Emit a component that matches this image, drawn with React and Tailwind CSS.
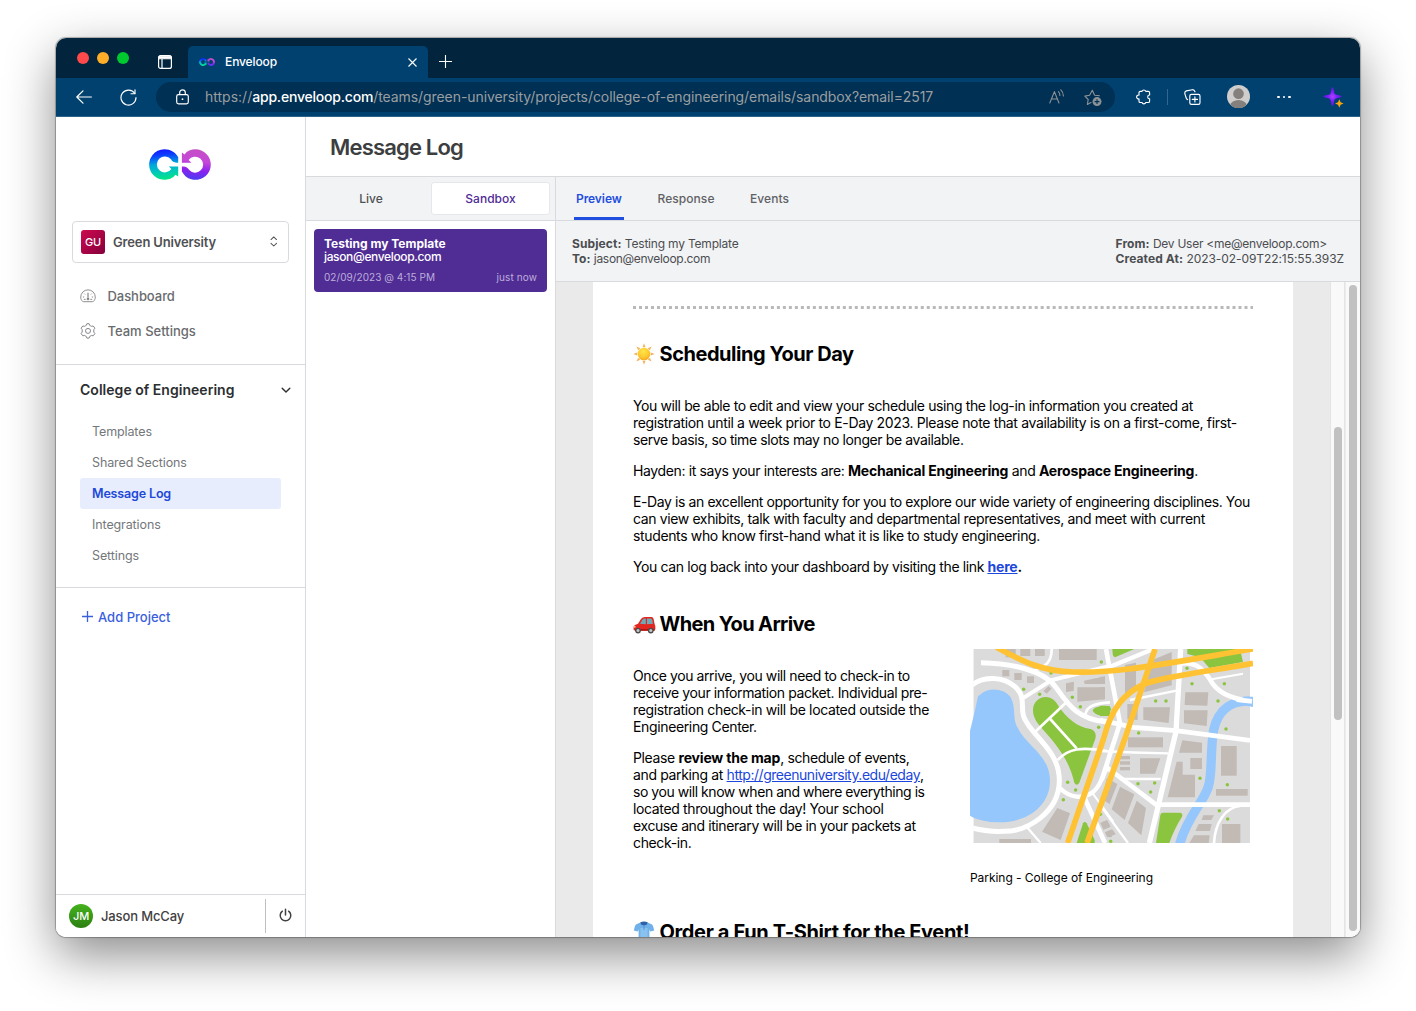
import React from "react";

/* ---------- brand ---------- */
function Logo({ className, id }) {
  return (
    <svg viewBox="0 0 62 31" className={className}>
      <defs>
        <linearGradient id={id + "l"} x1="0.3" y1="0" x2="0.4" y2="1">
          <stop offset="0" stopColor="#1616ff" />
          <stop offset="0.2" stopColor="#0d3cff" />
          <stop offset="0.5" stopColor="#00a8dc" />
          <stop offset="0.8" stopColor="#00cfae" />
          <stop offset="1" stopColor="#00e585" />
        </linearGradient>
        <linearGradient id={id + "r"} x1="0.6" y1="0" x2="0.5" y2="1">
          <stop offset="0" stopColor="#c44ec4" />
          <stop offset="0.4" stopColor="#c548d8" />
          <stop offset="0.7" stopColor="#8a22ee" />
          <stop offset="1" stopColor="#4a3cf0" />
        </linearGradient>
      </defs>
      <path
        fill={"url(#" + id + "l)"}
        d="M29.2 8.2C26.6 3.2 21.4 0.2 15.6 0.2A15.3 15.3 0 1 0 24.4 27.9L26.4 25.8L29.2 27.4V17.4H19.8L22.4 20A8 8 0 1 1 22 10.3C23.2 12.4 25 13.6 27.4 13.7H29.2Z"
      />
      <path
        fill={"url(#" + id + "r)"}
        d="M32.9 3.6L35.6 5.4L37.6 3.1A15.3 15.3 0 1 1 32.9 22.6V17.4H34.6C37.2 17.5 38.8 18.8 40 20.8A8 8 0 1 0 39.6 11L42.4 13.7H32.9Z"
      />
    </svg>
  );
}

/* ---------- browser chrome ---------- */
function TabStrip() {
  return (
    <div className="flex h-10 shrink-0 bg-[#02253d]">
      <div className="flex w-[132px] items-start pl-[21px]">
        <div className="flex gap-2 pt-[14px]">
          <span className="size-3 rounded-full bg-[#ff494a]" />
          <span className="size-3 rounded-full bg-[#ffae29]" />
          <span className="size-3 rounded-full bg-[#00c92f]" />
        </div>
        <svg viewBox="0 0 14 14" className="mt-[17px] ml-[29px] size-[14px]" fill="none" stroke="#fff" strokeWidth="1.2">
          <rect x="0.6" y="0.6" width="12.8" height="12.8" rx="2" />
          <path d="M4 4V13.4" />
          <path d="M1 1.2H13V3.8H1Z" fill="#fff" stroke="#fff" strokeWidth="0.8" />
        </svg>
      </div>
      <div className="mt-2 flex w-60 items-center rounded-t-[5px] bg-[#004170] pl-[11px]">
        <Logo id="tab" className="h-[8px] w-4" />
        <span className="ml-[10px] flex-1 text-[12px] leading-4 font-medium tracking-[-0.11px] text-white">Enveloop</span>
        <svg viewBox="0 0 9 9" className="mr-[11px] size-[9px]" stroke="#fff" strokeWidth="1.1">
          <path d="M0.5 0.5L8.5 8.5M8.5 0.5L0.5 8.5" />
        </svg>
      </div>
      <svg viewBox="0 0 13 13" className="mt-[17px] ml-[11px] size-[13px]" stroke="#fff" strokeWidth="1.1">
        <path d="M6.5 0V13M0 6.5H13" />
      </svg>
    </div>
  );
}

function Toolbar() {
  return (
    <div className="flex h-[39px] shrink-0 items-center border-b border-[#2e6489] bg-[#004170]">
      <svg viewBox="0 0 16 14" className="ml-[19.5px] h-[14px] w-4" fill="none" stroke="#fff" strokeWidth="1.2" strokeLinecap="round" strokeLinejoin="round">
        <path d="M15.4 7H0.8M7 0.8L0.8 7L7 13.2" />
      </svg>
      <svg viewBox="0 0 17 17" className="ml-7 size-[17px]" fill="none" stroke="#fff" strokeWidth="1.15" strokeLinecap="round" strokeLinejoin="round">
        <path d="M14.8 4.5A7.5 7.5 0 1 0 16 8.5" />
        <path d="M15 0.8V4.7H11" />
      </svg>
      <div className="ml-[19.5px] flex h-[30px] w-[959px] items-center rounded-full bg-[#003053]">
        <svg viewBox="0 0 13 16" className="mb-px ml-[19.5px] h-4 w-[13px]" fill="none" stroke="#fff" strokeWidth="1.2">
          <rect x="0.7" y="5.6" width="11.6" height="9.3" rx="1.8" />
          <path d="M3.7 5.6V3.6A2.8 2.8 0 0 1 9.3 3.6V5.6" />
          <circle cx="6.5" cy="10.2" r="0.9" fill="#fff" stroke="none" />
        </svg>
        <div className="ml-[16.5px] flex flex-1 text-[14px] leading-5 whitespace-nowrap text-[#9a9ea1]">
          <span>https://</span>
          <span className="font-medium tracking-[-0.2px] text-white">app.enveloop.com</span>
          <span className="tracking-[-0.076px]">/teams/green-university/projects/college-of-engineering/emails/sandbox?email=2517</span>
        </div>
        <svg viewBox="0 0 16 15" className="mr-[19px] mb-px h-[15px] w-4" fill="none" stroke="#8d9296" strokeWidth="1.1" strokeLinecap="round" strokeLinejoin="round">
          <path d="M0.8 14L5.4 2.6L10 14M2.4 10H8.4" />
          <path d="M9.4 2.6A5 5 0 0 1 10.9 6.4M11.8 0.8A8 8 0 0 1 14.4 7" />
        </svg>
        <svg viewBox="0 0 18 18" className="mt-px mr-[13.5px] size-[18px]" fill="none" stroke="#8d9296" strokeWidth="1.1" strokeLinejoin="round">
          <path d="M7.4 13.2L3.4 15.4L4.2 10.5L0.8 7.1L5.6 6.3L8.3 1.3L10.6 6.3L15.8 6.8" />
          <circle cx="13" cy="12.6" r="4.5" fill="#8d9296" stroke="none" />
          <path d="M13 10.2V15M10.6 12.6H15.4" stroke="#003053" />
        </svg>
      </div>
      <svg viewBox="0 0 15 16" className="ml-[21px] h-4 w-[15px]" fill="none" stroke="#fff" strokeWidth="1.15" strokeLinejoin="round">
        <path d="M3 3.6Q3 2.4 4.2 2.4H6A2 2 0 0 1 9.8 2.4H12.2Q13.6 2.4 13.6 3.8V6A1.9 1.9 0 0 0 13.6 9.8V12.2Q13.6 13.5 12.2 13.5H9.8A2 2 0 0 1 6 13.5H4.2Q3 13.5 3 12.2V9.9A1.95 1.95 0 1 1 3 6.1Z" />
      </svg>
      <span className="ml-4 h-4 w-px bg-[#33678d]" />
      <svg viewBox="0 0 17 16" className="ml-[15.5px] h-4 w-[17px]" fill="none" stroke="#fff" strokeWidth="1.15" strokeLinejoin="round" strokeLinecap="round">
        <rect x="5.8" y="5.4" width="10.2" height="10" rx="1.6" />
        <path d="M10.9 7.8V13M8.3 10.4H13.5" />
        <path d="M3.6 10.6Q2.6 10.4 2.2 9L0.9 4.8Q0.4 2.6 2.4 1.9L8.4 0.7Q10.2 0.5 11 2.8" />
      </svg>
      <svg viewBox="0 0 22 22" className="mb-px ml-[26px] size-[23px]">
        <defs>
          <clipPath id="avatar"><circle cx="11" cy="11" r="11" /></clipPath>
        </defs>
        <g clipPath="url(#avatar)">
          <rect width="22" height="22" fill="#d0cecc" />
          <circle cx="11" cy="8.3" r="5.1" fill="#83807e" />
          <ellipse cx="11" cy="19.6" rx="8" ry="5.2" fill="#83807e" />
        </g>
      </svg>
      <div className="ml-[27.5px] flex gap-[3px]">
        <span className="size-[2.5px] rounded-full bg-white" />
        <span className="size-[2.5px] rounded-full bg-white" />
        <span className="size-[2.5px] rounded-full bg-white" />
      </div>
      <svg viewBox="0 0 21 21" className="ml-8 size-[21px]">
        <defs>
          <radialGradient id="spark">
            <stop offset="0" stopColor="#a844ff" />
            <stop offset="0.5" stopColor="#7d1cff" />
            <stop offset="1" stopColor="#5a18d8" />
          </radialGradient>
        </defs>
        <path fill="url(#spark)" d="M9.5 0.3C11 0.3 10.6 5.2 11.8 7C13.4 8.3 18.6 8.2 18.6 9.6C18.6 11 13.4 10.8 11.8 12.2C10.6 14 11 18.9 9.5 18.9C8 18.9 8.4 14 7.2 12.2C5.6 10.8 0.4 11 0.4 9.6C0.4 8.2 5.6 8.3 7.2 7C8.4 5.2 8 0.3 9.5 0.3Z" />
        <path fill="#f7a50c" d="M16.3 12.2L17.6 15.2L20.6 16.5L17.6 17.8L16.3 20.8L15 17.8L12 16.5L15 15.2Z" />
      </svg>
    </div>
  );
}

/* ---------- sidebar ---------- */
function Sidebar() {
  const pages = [
    ["Templates", false],
    ["Shared Sections", false],
    ["Message Log", true],
    ["Integrations", false],
    ["Settings", false],
  ];
  return (
    <aside className="flex w-[250px] shrink-0 flex-col border-r border-[#d9dadd] bg-white">
      <div className="flex h-[104px] justify-center pt-8 pr-px">
        <Logo id="side" className="h-[31px] w-[62px]" />
      </div>
      <div className="mx-4 flex h-[42px] items-center rounded-[4px] border border-[#d9dadd] px-2">
        <span className="flex size-6 items-center justify-center rounded-[3px] bg-gradient-to-br from-[#cf0a4f] to-[#85003c] pt-px text-[11px] font-medium tracking-[-0.3px] text-white">GU</span>
        <span className="ml-2 flex-1 pt-0.5 text-[13px] font-semibold tracking-[-0.15px] text-[#4f5153]">Green University</span>
        <svg viewBox="0 0 8 12" className="mr-[3px] mb-px h-[11px] w-[7.5px]" fill="none" stroke="#505255" strokeWidth="1.1" strokeLinecap="round" strokeLinejoin="round">
          <path d="M1 3.9L4 1L7 3.9M1 8L4 10.9L7 8" />
        </svg>
      </div>
      <nav className="flex h-[102px] flex-col border-b border-[#d9dadd] pt-4 pl-6 text-[13px] font-medium text-[#696b6e]">
        <div className="flex h-[35px] items-center gap-[11.5px]">
          <svg viewBox="0 0 17 15" className="mb-px h-[14px] w-4" fill="none" stroke="#85878b" strokeWidth="1">
            <path d="M2.6 13.2C1.3 12 0.7 10.3 0.7 8.7A7.8 7.8 0 0 1 16.3 8.7C16.3 10.3 15.7 12 14.4 13.2Q14 13.6 13.2 13.6H3.8Q3 13.6 2.6 13.2Z" />
            <path d="M8.5 4V9.2" strokeWidth="1.3" />
            <circle cx="8.5" cy="10.6" r="1.4" fill="#85878b" stroke="none" />
            <path d="M3 8.6H4.4M12.6 8.6H14M4.6 5L5.5 5.9M12.4 5L11.5 5.9M4 11.1H6M11 11.1H13" />
          </svg>
          <span className="tracking-[-0.05px]">Dashboard</span>
        </div>
        <div className="flex h-[35px] items-center gap-[11.5px]">
          <svg viewBox="0 0 16 16" className="mb-px size-4" fill="none" stroke="#85878b" strokeWidth="1" strokeLinejoin="round">
            <path d="M6.2 2.5L6.9 0.7H9.1L9.8 2.5Q10.6 2.8 11.3 3.3L13.2 3L14.9 5.2L13.8 6.7V9.1L14.9 10.6L13.2 12.8L11.3 12.5Q10.6 13 9.8 13.3L9.1 15.1H6.9L6.2 13.3Q5.4 13 4.7 12.5L2.8 12.8L1.1 10.6L2.2 9.1V6.7L1.1 5.2L2.8 3L4.7 3.3Q5.4 2.8 6.2 2.5Z" />
            <circle cx="8" cy="7.9" r="2.5" />
          </svg>
          <span>Team Settings</span>
        </div>
      </nav>
      <div className="flex h-[223px] flex-col border-b border-[#d9dadd] pr-6 pl-6">
        <div className="-mr-2.5 flex h-[51px] items-center justify-between text-[14px] font-semibold tracking-[0.033px] text-[#2c2e30]">
          <span className="pb-0.5">College of Engineering</span>
          <svg viewBox="0 0 10 7" className="h-[7px] w-[10px]" fill="none" stroke="#2c2e30" strokeWidth="1.4" strokeLinecap="round" strokeLinejoin="round">
            <path d="M1.2 1.2L5 5L8.8 1.2" />
          </svg>
        </div>
        {pages.map(([name, active]) => (
          <div
            key={name}
            className={
              active
                ? "flex h-[31px] items-center rounded-[3px] bg-[#e8edfd] pt-0.5 pl-3 text-[12.5px] font-semibold tracking-[-0.15px] text-[#2049d8]"
                : "flex h-[31px] items-center rounded-[3px] pt-0.5 pl-3 text-[12.5px] tracking-[-0.11px] text-[#74777a]"
            }
          >
            {name}
          </div>
        ))}
      </div>
      <div className="mt-[19px] flex items-center gap-[6px] pl-[26px] text-[13px] leading-5 font-medium text-[#3b5fdc]">
        <svg viewBox="0 0 11 11" className="mb-px size-[11px]" stroke="#3b5fdc" strokeWidth="1.3">
          <path d="M5.5 0V11M0 5.5H11" />
        </svg>
        <span className="-ml-px">Add Project</span>
      </div>
      <div className="mt-auto flex h-[43px] items-center border-t border-[#d9dadd] pl-[13px]">
        <span className="flex size-6 items-center justify-center rounded-full bg-gradient-to-b from-[#45b31c] to-[#2c7f12] pt-px text-[11px] font-medium tracking-[-0.3px] text-white">JM</span>
        <span className="ml-2 flex-1 pt-0.5 text-[13px] font-medium tracking-[-0.14px] text-[#3f4143]">Jason McCay</span>
        <div className="flex h-[34px] w-10 items-center justify-center border-l border-[#bfc0c2]">
          <svg viewBox="0 0 13 14" className="mb-0.5 h-[14px] w-[13px]" fill="none" stroke="#3f4143" strokeWidth="1.5" strokeLinecap="round">
            <path d="M6.5 1.2V7M3.4 3.2A5.3 5.3 0 1 0 9.6 3.2" />
          </svg>
        </div>
      </div>
    </aside>
  );
}

/* ---------- message list ---------- */
function MessageList() {
  return (
    <section className="flex w-[250px] shrink-0 flex-col border-r border-[#d9dadd]">
      <div className="flex h-11 items-center border-b border-[#d9dadd] bg-[#f2f3f5] text-[12px] font-medium">
        <span className="w-[125px] pl-[5px] text-center text-[#4f5153]">Live</span>
        <span className="flex h-[33px] w-[119px] items-center justify-center rounded-[3px] border border-[#e6e7ea] bg-white text-[#4f2b96]">Sandbox</span>
      </div>
      <div className="mx-2 mt-2 mr-2 h-[63px] rounded-[4px] bg-[#502c95] px-[10px] pt-2 text-white">
        <div className="text-[12px] leading-[14px] font-bold">Testing my Template</div>
        <div className="-mt-px text-[12px] leading-[13px] font-medium tracking-[-0.36px]">jason@enveloop.com</div>
        <div className="mt-[7px] flex justify-between text-[10px] leading-[14px] tracking-[0.06px] text-[#bdaedb]">
          <span>02/09/2023 @ 4:15 PM</span>
          <span className="tracking-[0.11px]">just now</span>
        </div>
      </div>
    </section>
  );
}

/* ---------- illustrated map ---------- */
function CampusMap() {
  const rectsL = [
    [137, 27, 30, 25], [181, 27, 30, 21], [225, 27, 29, 21], [297, 27, 113, 33],
    [127, 90, 21, 19], [163, 99, 22, 21], [201, 109, 21, 20], [118, 597, 95, 12],
  ];
  const rectsR = [
    [60, 348, 30, 10], [60, 364, 30, 10], [60, 381, 30, 10], [84, 292, 105, 30],
    [271, 354, 35, 33], [363, 318, 47, 89], [348, 447, 95, 20], [366, 552, 55, 57],
  ];
  const polysL = [
    "318,130 342,125 341,153 318,156", "352,142 435,142 435,178 352,185", "372,122 435,109 435,132 374,132",
    "250,153 266,138 274,146 260,161", "292,504 330,520 302,600 246,575",
    "421,549 440,541 450,560 430,569", "435,577 455,568 455,592 441,590",
    "450,405 450,493 430,480",
  ];
  const polysR = [
    "75,75 108,68 108,140 90,155 75,163", "152,62 215,36 215,136 132,157", "82,192 113,192 113,240 82,238",
    "130,202 210,202 206,249 130,239", "256,157 325,157 322,197 254,195", "252,211 323,211 320,258 252,250",
    "247,301 306,308 306,338 237,338", "120,355 181,355 165,401 120,401", "230,365 248,365 248,404 285,404 285,472 203,472",
    "60,440 103,463 74,540 35,508", "110,482 138,504 124,586 84,549", "20,415 52,432 30,488 8,470",
    "310,526 342,526 334,540 305,540", "296,552 335,552 330,573 286,573", "282,586 329,586 326,609 268,609",
    "0,110 14,110 14,132 0,132", "0,142 14,142 14,178 0,178", "5,547 22,541 32,560 12,568", "16,577 38,569 47,583 24,592",
  ];
  const dotsL = [[191, 148], [239, 163], [273, 99], [424, 66], [337, 172], [361, 200], [416, 262], [323, 427], [347, 450], [310, 479], [421, 523]];
  const dotsR = [[261, 85], [276, 131], [373, 131], [354, 183], [378, 267], [167, 183], [198, 183], [116, 279], [300, 415], [382, 434], [114, 431], [164, 429], [152, 456], [358, 512], [383, 537], [32, 604]];
  return (
    <svg viewBox="0 0 849 582" className="block h-[194px] w-[283px]">
      <defs>
        <clipPath id="land"><rect x="10" y="0" width="830" height="582" /></clipPath>
      </defs>
      <g clipPath="url(#land)">
        <rect x="10" width="830" height="582" fill="#dbdbdb" />
        <g fill="#c2bab5">
          <g transform="translate(-30 -27)">
            {rectsL.map((r, i) => <rect key={i} x={r[0]} y={r[1]} width={r[2]} height={r[3]} />)}
            {polysL.map((p, i) => <polygon key={i} points={p} />)}
          </g>
          <g transform="translate(390 -27)">
            {rectsR.map((r, i) => <rect key={i} x={r[0]} y={r[1]} width={r[2]} height={r[3]} />)}
            {polysR.map((p, i) => <polygon key={i} points={p} />)}
          </g>
        </g>
        <g fill="#8bc53f">
          <g transform="translate(-30 -27)">
            <path d="M219 210C219 188 236 171 257 171C276 171 288 184 296 199C318 232 350 262 392 267C404 270 410 282 406 296L358 428Q350 440 343 428C330 370 300 325 250 270C230 248 219 232 219 210Z" />
            <path d="M398 212C402 200 425 196 450 199V228C425 228 405 226 398 212Z" />
            <path d="M350 609L369 550Q374 542 380 550L404 600V609Z" />
          </g>
          <g transform="translate(390 -27)">
            <path d="M37 27H103L45 52Q38 50 38 42Z" />
            <path d="M262 27H420L429 66L328 84L300 52L262 42Z" />
            <path d="M0 198C20 196 33 198 33 208L24 228H0Z" />
            <path d="M181 525Q182 518 190 518H240Q250 520 246 530C230 555 218 580 208 609H168Z" />
          </g>
        </g>
        <g transform="translate(390 -27)" fill="none" stroke="#95c7fd">
          <path d="M459 184C400 178 355 205 341 270C330 330 338 400 325 440C312 485 262 530 239 612" strokeWidth="28" />
        </g>
        <g fill="none" stroke="#fff">
          <g transform="translate(-30 -27)">
            <path d="M63 68C150 70 225 88 270 122C310 158 325 235 440 246" strokeWidth="15" />
            <path d="M30 140C70 105 130 110 165 140C200 172 180 200 192 232C215 290 300 330 298 425C296 515 205 575 130 574C95 576 60 570 30 562" strokeWidth="15" />
            <path d="M188 175L275 120L450 78" strokeWidth="12" />
            <path d="M275 27C275 65 258 80 222 92" strokeWidth="8" />
            <path d="M225 276L320 186M268 234L350 325" strokeWidth="8" />
            <path d="M293 360C325 325 365 320 440 333" strokeWidth="8" />
            <path d="M376 226C378 198 405 190 450 187" strokeWidth="8" />
            <path d="M300 445C330 475 370 478 400 455C425 435 425 405 445 380" strokeWidth="13" />
            <path d="M372 470L435 609" strokeWidth="14" />
            <path d="M398 460L460 545" strokeWidth="6" />
            <path d="M203 564L242 609" strokeWidth="7" />
          </g>
          <g transform="translate(390 -27)">
            <path d="M18 27L60 250L5 420" strokeWidth="14" />
            <path d="M30 80L160 27" strokeWidth="13" />
            <path d="M242 27L228 275L148 609" strokeWidth="16" />
            <path d="M0 240L100 262L228 272L450 301" strokeWidth="14" />
            <path d="M90 180L230 152" strokeWidth="7" />
            <path d="M0 333C40 335 100 338 205 340" strokeWidth="7" />
            <path d="M68 417H182" strokeWidth="7" />
            <path d="M15 378L168 494H450" strokeWidth="14" />
            <path d="M245 70C290 65 310 90 330 118C350 158 395 178 459 184" strokeWidth="14" />
            <path d="M335 118L429 101" strokeWidth="6" />
            <path d="M342 609C345 550 375 502 420 498" strokeWidth="8" />
            <path d="M0 495L84 609" strokeWidth="7" />
          </g>
        </g>
        <g fill="#8bc53f">
          <g transform="translate(-30 -27)">{dotsL.map((d, i) => <circle key={i} cx={d[0]} cy={d[1]} r="5.2" />)}</g>
          <g transform="translate(390 -27)">{dotsR.map((d, i) => <circle key={i} cx={d[0]} cy={d[1]} r="5.2" />)}</g>
        </g>
      </g>
      <path d="M30 137C55 112 105 118 122 145C140 180 125 210 145 240C170 290 240 320 240 395C240 475 165 520 90 520C50 520 20 512 0 500V245C10 210 18 170 24 142Z" fill="#95c7fd" />
      <path d="M820 143H849V174L820 168Z" fill="#95c7fd" />
      <path d="M800 152L846 157" stroke="#fff" strokeWidth="14" />
      <g transform="translate(390 -27)" fill="none" stroke="#ffc233" strokeWidth="17">
        <path d="M-310 22C-240 60 -180 94 -80 96C50 100 160 77 459 27" />
        <path d="M-97 609L10 298C35 200 75 160 130 133C175 115 260 104 459 70" />
        <path d="M-39 609L75 295L165 27" />
      </g>
    </svg>
  );
}

/* ---------- heading pictographs ---------- */
function SunIcon() {
  return (
    <svg viewBox="0 0 22 22" className="size-[22px]">
      <defs>
        <radialGradient id="sun" cx="0.45" cy="0.3" r="0.8">
          <stop offset="0" stopColor="#ffe64a" />
          <stop offset="0.6" stopColor="#fdc62e" />
          <stop offset="1" stopColor="#ee9a1c" />
        </radialGradient>
      </defs>
      <g fill="#f2b35a">
        {[0, 45, 90, 135, 180, 225, 270, 315].map((a) => (
          <path key={a} d="M11 0.3L12.5 4.2H9.5Z" transform={"rotate(" + a + " 11 11)"} />
        ))}
      </g>
      <circle cx="11" cy="11" r="6.3" fill="url(#sun)" />
    </svg>
  );
}

function CarIcon() {
  return (
    <svg viewBox="0 0 23 18" className="mt-px h-[18px] w-[23px]">
      <path fill="#e3261f" d="M0.6 14V10.4Q1.2 8.8 5 7.8L8 3Q9.4 1 12 1H18.6Q20 1 20.6 3L21.6 8Q22.6 9.4 22.4 13L21.4 14.6H1.6Z" />
      <path fill="#6fa9b8" d="M7 7.8L9.4 3.8Q10.2 2.6 12 2.6H12.8V8.2ZM14 2.6H17.8Q18.8 2.6 19.2 4L20 7.8L14 8.2Z" />
      <path fill="#b3140f" d="M2 13H21.6V14.8H2Z" />
      <circle cx="5" cy="14.6" r="2.9" fill="#4c4c4e" />
      <circle cx="5" cy="14.6" r="1.5" fill="#c4c6c8" />
      <circle cx="17.8" cy="14.6" r="2.9" fill="#4c4c4e" />
      <circle cx="17.8" cy="14.6" r="1.5" fill="#c4c6c8" />
      <circle cx="1.8" cy="10.8" r="0.9" fill="#ffd9a8" />
    </svg>
  );
}

function ShirtIcon() {
  return (
    <svg viewBox="0 0 22 22" className="size-[22px]">
      <path fill="#6fb1e8" d="M7.4 1.4L3.4 3.2Q2.4 3.8 1.8 5.4L0.8 9.4L4.8 10.6L5.6 8.6V21.4H16.4V8.6L17.2 10.6L21.2 9.4L20.2 5.4Q19.6 3.8 18.6 3.2L14.6 1.4Z" />
      <path fill="#9bcdf4" d="M7.4 7H14.6V21H7.4Z" opacity="0.6" />
      <path fill="#2d62a6" d="M7.4 1.2Q11 -0.4 14.6 1.2L14 3.4L11 4.4L8 3.4Z" />
      <path stroke="#4a8ac8" strokeWidth="0.8" d="M11 4.4V9" />
    </svg>
  );
}

/* ---------- e-mail preview ---------- */
function Heading({ icon, children, spacing }) {
  return (
    <h2 className="flex h-6 items-center text-[20px] leading-6 font-bold whitespace-nowrap">
      <span className="w-[26.5px]">{icon}</span>
      <span className={spacing}>{children}</span>
    </h2>
  );
}

function Email() {
  return (
    <article className="h-[655px] w-[700px] overflow-hidden bg-white px-10 text-[14px] leading-[17px] tracking-[-0.36px] whitespace-nowrap text-black">
      <svg viewBox="0 0 620 3" className="mt-6 block h-[3px] w-[620px]">
        <path d="M0 1.5H620" stroke="#b9b9b9" strokeWidth="3" strokeDasharray="3 2.995" />
      </svg>
      <div className="mt-[33px]">
        <Heading icon={<SunIcon />} spacing="tracking-[-0.45px]">Scheduling Your Day</Heading>
      </div>
      <p className="mt-[31px]">
        <span className="tracking-[-0.382px]">You will be able to edit and view your schedule using the log-in information you created at</span><br />
        <span className="tracking-[-0.35px]">registration until a week prior to E-Day 2023. Please note that availability is on a first-come, first-</span><br />
        <span className="tracking-[-0.39px]">serve basis, so time slots may no longer be available.</span>
      </p>
      <p className="mt-[14px]">
        Hayden: it says your interests are: <b className="tracking-[-0.22px]">Mechanical Engineering</b> and <b className="tracking-[-0.21px]">Aerospace Engineering</b>.
      </p>
      <p className="mt-[14px]">
        <span className="tracking-[-0.4px]">E-Day is an excellent opportunity for you to explore our wide variety of engineering disciplines. You</span><br />
        <span className="tracking-[-0.375px]">can view exhibits, talk with faculty and departmental representatives, and meet with current</span><br />
        students who know first-hand what it is like to study engineering.
      </p>
      <p className="mt-[14px]">
        <span className="tracking-[-0.385px]">You can log back into your dashboard by visiting the link </span><b className="tracking-[-0.18px]"><span className="text-[#1c46dc] underline">here</span>.</b>
      </p>
      <div className="mt-[37px]">
        <Heading icon={<CarIcon />} spacing="tracking-[-0.62px]">When You Arrive</Heading>
      </div>
      <div className="mt-[13px] flex">
        <div className="w-[337px] pt-[18px]">
          <p>
            <span className="tracking-[-0.41px]">Once you arrive, you will need to check-in to</span><br />
            <span className="tracking-[-0.39px]">receive your information packet. Individual pre-</span><br />
            <span className="tracking-[-0.35px]">registration check-in will be located outside the</span><br />
            Engineering Center.
          </p>
          <p className="mt-[14px]">
            Please <b className="tracking-[-0.18px]">review the map</b><span className="tracking-[-0.39px]">, schedule of events,</span><br />
            and parking at <span className="tracking-[-0.46px] text-[#1c46dc] underline">http://greenuniversity.edu/eday</span>,<br />
            <span className="tracking-[-0.45px]">so you will know when and where everything is</span><br />
            located throughout the day! Your school<br />
            <span className="tracking-[-0.4px]">excuse and itinerary will be in your packets at</span><br />
            check-in.
          </p>
        </div>
        <figure className="w-[283px]">
          <CampusMap />
          <figcaption className="mt-[26px] text-[12px] leading-[17px] tracking-[-0.05px]">Parking - College of Engineering</figcaption>
        </figure>
      </div>
      <div className="mt-[34px]">
        <Heading icon={<ShirtIcon />} spacing="tracking-[-0.36px]">Order a Fun T-Shirt for the Event!</Heading>
      </div>
    </article>
  );
}

function Detail() {
  return (
    <section className="flex min-w-0 flex-1 flex-col">
      <div className="flex h-11 gap-[34px] border-b border-[#d9dadd] bg-[#f2f3f5] pl-[18px] text-[12px] font-medium text-[#5f6164]">
        <span className="flex h-[43px] w-[50px] items-center border-b-[3px] border-[#1f4ee0] pt-[3px] pl-0.5 font-semibold tracking-[-0.08px] text-[#1f4ee0]">Preview</span>
        <span className="-ml-[0.5px] flex h-[43px] items-center tracking-[0.06px]">Response</span>
        <span className="flex h-[43px] items-center pl-[1.5px] tracking-[0.06px]">Events</span>
      </div>
      <div className="flex h-[61px] items-center justify-between border-b border-[#d9dadd] bg-[#f2f3f5] pr-4 pl-4 text-[12px] leading-[15px] text-[#4b4d50]">
        <div>
          <div><b className="tracking-[0.09px]">Subject:</b> <span className="tracking-[-0.2px]">Testing my Template</span></div>
          <div><b>To:</b> <span className="tracking-[-0.31px]">jason@enveloop.com</span></div>
        </div>
        <div>
          <div><b className="tracking-[0.05px]">From:</b> <span className="tracking-[-0.26px]">Dev User &lt;me@enveloop.com&gt;</span></div>
          <div><b className="tracking-[0.08px]">Created At:</b> <span className="tracking-[-0.07px]">2023-02-09T22:15:55.393Z</span></div>
        </div>
      </div>
      <div className="flex min-h-0 flex-1">
        <div className="flex w-[774px] bg-[#eaeaea] pl-[37px]">
          <Email />
        </div>
        <div className="w-[15px] border-x border-[#e4e4e4] bg-[#f9f9f9] pt-[145px]">
          <div className="mx-auto ml-[3px] h-[293px] w-2 rounded-full bg-[#c1c1c1]" />
        </div>
        <div className="w-[15px] border-l border-[#ececec] bg-[#f9f9f9] pt-[3px]">
          <div className="ml-[3px] h-[646px] w-2 rounded-full bg-[#c1c1c1]" />
        </div>
      </div>
    </section>
  );
}

export default function App() {
  return (
    <div className="h-[1011px] w-[1416px] overflow-hidden bg-white px-14 pt-[38px] font-['Inter',sans-serif]">
      <div className="rounded-[10px] shadow-[0_18px_50px_rgba(0,0,0,0.46),0_0_1px_1px_rgba(0,0,0,0.28)]">
        <div className="flex h-[899px] w-[1304px] flex-col overflow-hidden rounded-[10px] bg-white">
          <TabStrip />
          <Toolbar />
          <div className="flex min-h-0 flex-1">
            <Sidebar />
            <main className="flex min-w-0 flex-1 flex-col">
              <header className="flex h-[60px] shrink-0 items-center border-b border-[#d9dadd] pl-6">
                <h1 className="text-[22px] leading-7 font-semibold tracking-[-0.83px] text-[#3c3e40]">Message Log</h1>
              </header>
              <div className="flex min-h-0 flex-1">
                <MessageList />
                <Detail />
              </div>
            </main>
          </div>
        </div>
      </div>
    </div>
  );
}
